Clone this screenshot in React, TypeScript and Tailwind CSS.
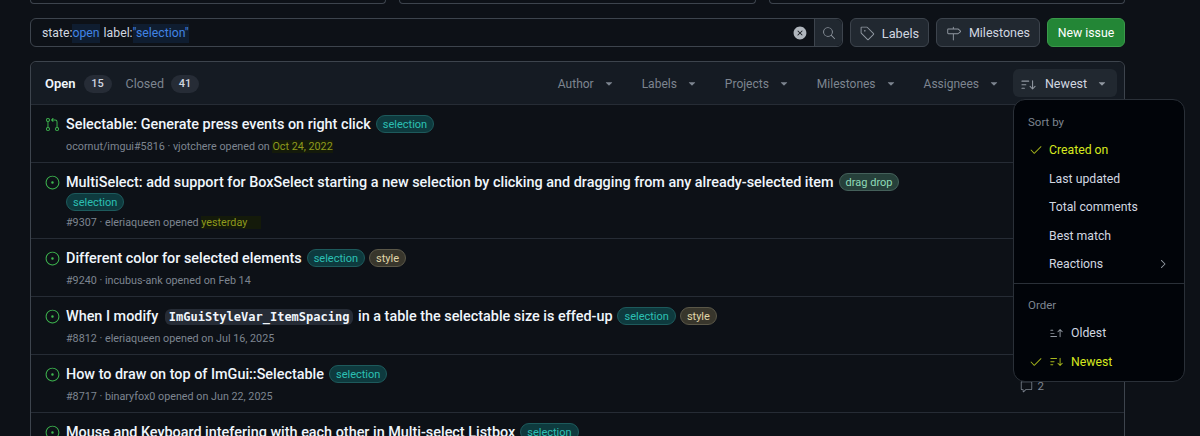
import { ReactNode } from "react";
import {
  GoCheck,
  GoChevronRight,
  GoComment,
  GoGitPullRequest,
  GoIssueOpened,
  GoMilestone,
  GoSearch,
  GoSortAsc,
  GoSortDesc,
  GoTag,
  GoTriangleDown,
  GoXCircleFill,
} from "react-icons/go";

const labelStyles = {
  selection: "bg-[#0e3a3e] border-[#1d5a5c] text-[#2cc0b4]",
  style: "bg-[#38362c] border-[#5a5748] text-[#e0d6a8]",
  "drag drop": "bg-[#26403a] border-[#44605a] text-[#8fdcb8]",
};

type LabelName = keyof typeof labelStyles;

const Label = ({ name }: { name: LabelName }) => (
  <span className={`-mt-[2px] inline-flex h-[18px] items-center rounded-full border px-[6px] text-[11px] font-normal leading-none align-middle ${labelStyles[name]}`}>
    {name}
  </span>
);

const Row = ({
  title,
  labels,
  meta,
  date,
  pr,
  wrapLabel,
  hint,
}: {
  title: ReactNode;
  labels: LabelName[];
  meta: string;
  date?: string;
  pr?: boolean;
  wrapLabel?: LabelName;
  hint?: boolean;
}) => (
  <div className="flex border-b border-[#262c35] pl-[14px] pt-[7px] pb-[6px]">
    <div className="flex h-6 w-[21px] shrink-0 items-center">
      {pr ? <GoGitPullRequest className="text-[#3fb950]" size={15} /> : <GoIssueOpened className="text-[#3fb950]" size={15} />}
    </div>
    <div className="min-w-0">
      <div className="flex h-6 items-center gap-[4px] whitespace-nowrap pt-[2px] text-[14.4px] font-medium text-[#f0f6fc]">
        <span className="mr-[1px]">{title}</span>
        {labels.map((l) => (
          <Label key={l} name={l} />
        ))}
      </div>
      {wrapLabel && (
        <div className="mb-px flex h-[18px] items-center">
          <Label name={wrapLabel} />
        </div>
      )}
      <div className="mt-[2px] text-[10.75px] leading-[18px] text-[#7d8590]">
        {meta}
        {date && <span className={hint ? "bg-[#141a0a] pr-[14px] text-[#8f9a1c]" : "bg-[#141a0a] text-[#8f9a1c]"}>{date}</span>}
      </div>
    </div>
  </div>
);

const FilterItem = ({ name }: { name: string }) => (
  <div className="flex items-center gap-[9px] pt-[2px] text-[#7d8590]">
    {name}
    <GoTriangleDown size={12} />
  </div>
);

const MenuItem = ({ children, selected }: { children: ReactNode; selected?: boolean }) => (
  <div className={`flex h-[28.5px] items-center text-[12.25px] ${selected ? "text-[#d6e81e]" : "text-[#d1d7e0]"}`}>
    <div className="w-[20px] shrink-0">{selected && <GoCheck size={14} className="text-[#a8b81c]" />}</div>
    {children}
  </div>
);

export default function App() {
  return (
    <div className="h-[436px] w-[1200px] overflow-hidden bg-[#0d1117] font-['Roboto',sans-serif]">
      <div className="ml-[30px] w-[1095px]">
        <div className="grid h-1 grid-cols-3 gap-[13px]">
          <div className="rounded-b-md border-x border-b border-[#3d444d]" />
          <div className="rounded-b-md border-x border-b border-[#3d444d]" />
          <div className="rounded-b-md border-x border-b border-[#3d444d]" />
        </div>

        <div className="mt-[14px] flex h-[29px] gap-[7px]">
          <div className="flex flex-1 rounded-md border border-[#3d444d]">
            <div className="flex flex-1 items-center pl-[11px] pt-[2px] text-[12.25px] text-[#d1d7e0]">
              state:<span className="bg-[#0f1d30] text-[#4184e4]">open</span>
              <span className="ml-[4px]">label:</span>
              <span className="bg-[#0f1d30] text-[#4184e4]">"selection"</span>
            </div>
            <div className="flex w-[21px] items-center">
              <GoXCircleFill size={14} className="text-[#b0b6bd]" />
            </div>
            <div className="flex w-[28px] items-center justify-center rounded-r-md border-l border-[#3d444d] bg-[#212830]">
              <GoSearch size={14} className="text-[#9198a1]" />
            </div>
          </div>
          <div className="flex w-[79px] items-center justify-center gap-[7px] rounded-md border border-[#3d444d] bg-[#212830] pt-[2px] text-[12.75px] text-[#d1d7e0]">
            <GoTag size={15} className="text-[#9198a1]" />
            Labels
          </div>
          <div className="flex w-[104px] items-center justify-center gap-[8px] rounded-md border border-[#3d444d] bg-[#212830] pt-[2px] text-[12.5px] text-[#d1d7e0]">
            <GoMilestone size={15} className="text-[#9198a1]" />
            Milestones
          </div>
          <div className="flex w-[78px] items-center justify-center rounded-md border border-[#3a9a4a] bg-[#238636] pt-[2px] text-[12.25px] text-white">
            New issue
          </div>
        </div>

        <div className="relative mt-[14px] rounded-t-md border border-[#3d444d]">
          <div className="flex h-[43px] items-center justify-between rounded-t-md border-b border-[#262c35] bg-[#151b23] pl-[14px] pr-[7px] text-[12px]">
            <div className="flex items-center pt-[2px]">
              <span className="text-[13px] font-semibold text-[#f0f6fc]">Open</span>
              <span className="ml-[8px] flex h-[18px] w-[28px] items-center justify-center rounded-full bg-[#262c36] text-[11px] font-medium text-[#d1d7e0]">15</span>
              <span className="ml-[14px] text-[12.5px] text-[#7d8590]">Closed</span>
              <span className="ml-[7px] flex h-[18px] w-[28px] items-center justify-center rounded-full bg-[#262c36] text-[11px] font-medium text-[#d1d7e0]">41</span>
            </div>
            <div className="flex items-center gap-[27px]">
              <FilterItem name="Author" />
              <FilterItem name="Labels" />
              <FilterItem name="Projects" />
              <FilterItem name="Milestones" />
              <FilterItem name="Assignees" />
              <div className="-ml-[14px] flex h-[28px] w-[104px] items-center justify-center gap-[8px] rounded-md bg-[#212830] pt-[2px] pr-[2px] text-[12.5px] text-[#d1d7e0]">
                <GoSortDesc size={17} className="text-[#9198a1]" />
                Newest
                <GoTriangleDown size={12} className="ml-[1px] text-[#9198a1]" />
              </div>
            </div>
          </div>

          <Row pr title="Selectable: Generate press events on right click" labels={["selection"]} meta="ocornut/imgui#5816 · vjotchere opened on " date="Oct 24, 2022" />
          <Row
            title="MultiSelect: add support for BoxSelect starting a new selection by clicking and dragging from any already-selected item"
            labels={["drag drop"]}
            wrapLabel="selection"
            meta="#9307 · eleriaqueen opened "
            date="yesterday"
            hint
          />
          <Row title="Different color for selected elements" labels={["selection", "style"]} meta="#9240 · incubus-ank opened on Feb 14" />
          <Row
            title={
              <>
                When I modify{" "}
                <code className="ml-[3px] mr-px rounded-md bg-[#262c36] px-[4px] py-[1px] font-['DejaVu_Sans_Mono',monospace] text-[12px] font-bold">ImGuiStyleVar_ItemSpacing</code>{" "}
                in a table the selectable size is effed-up
              </>
            }
            labels={["selection", "style"]}
            meta="#8812 · eleriaqueen opened on Jul 16, 2025"
          />
          <div className="relative">
            <Row title="How to draw on top of ImGui::Selectable" labels={["selection"]} meta="#8717 · binaryfox0 opened on Jun 22, 2025" />
            <div className="absolute right-[80px] top-[23px] flex items-center gap-[5px] text-[11.5px] text-[#7d8590]">
              <GoComment size={13} />2
            </div>
          </div>
          <Row title="Mouse and Keyboard intefering with each other in Multi-select Listbox" labels={["selection"]} meta="#8600" />

          <div className="absolute left-[982px] top-[37px] z-10 h-[283px] w-[172px] rounded-xl border border-[#2a3038] bg-[#010409]">
            <div className="px-[14px] pt-[14px] text-[11.5px] leading-[16px] text-[#7d8590]">Sort by</div>
            <div className="mt-[6px] px-[15px]">
              <MenuItem selected>Created on</MenuItem>
              <MenuItem>Last updated</MenuItem>
              <MenuItem>Total comments</MenuItem>
              <MenuItem>Best match</MenuItem>
              <MenuItem>
                <span className="flex-1">Reactions</span>
                <GoChevronRight size={14} className="mr-[-1px] text-[#9198a1]" />
              </MenuItem>
            </div>
            <div className="mt-[4px] border-t border-[#2a3038]" />
            <div className="px-[14px] pt-[13px] text-[11.5px] leading-[16px] text-[#7d8590]">Order</div>
            <div className="mt-[6.5px] px-[15px]">
              <MenuItem>
                <GoSortAsc size={15} className="mr-[7px] text-[#9198a1]" />
                Oldest
              </MenuItem>
              <MenuItem selected>
                <GoSortDesc size={15} className="mr-[7px] text-[#a8b81c]" />
                Newest
              </MenuItem>
            </div>
          </div>
        </div>
      </div>
    </div>
  );
}
